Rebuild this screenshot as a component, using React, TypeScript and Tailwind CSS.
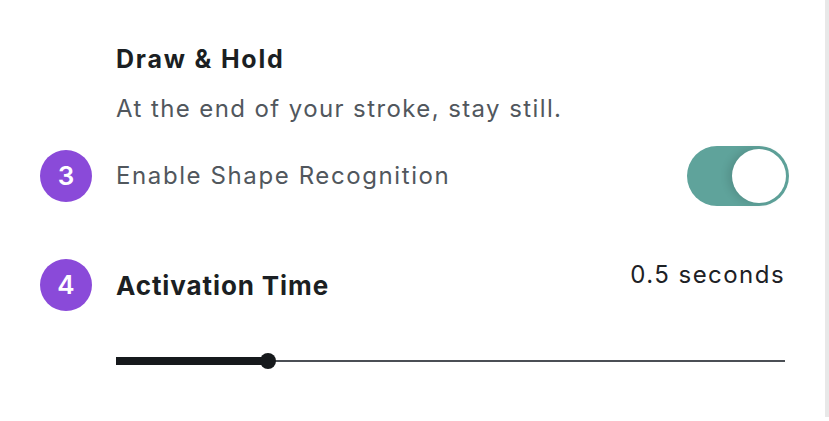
import { useState } from "react";

const font = { fontFamily: "Inter, 'Noto Sans', sans-serif" };

function Step({ n }: { n: number }) {
  return (
    <div className="w-[52px] h-[52px] shrink-0 rounded-full bg-[#8a4ad9] flex items-center justify-center text-white text-[26px] font-semibold leading-none">
      {n}
    </div>
  );
}

export default function App() {
  const [on, setOn] = useState(true);
  const value = 0.5;
  const pct = 22.7;

  return (
    <div className="w-[829px] h-[421px] flex bg-white overflow-hidden" style={font}>
      <div className="flex-1 pl-[40px] pr-[36px] pt-[43px]">
        {/* Draw & Hold */}
        <div className="ml-[76px]">
          <h2 className="h-[32px] leading-[32px] text-[25px] font-bold tracking-[1.8px] text-[#1b1f23]">Draw &amp; Hold</h2>
          <p className="mt-[18px] h-[32px] leading-[32px] text-[24px] tracking-[1.4px] text-[#51575d]">
            At the end of your stroke, stay still.
          </p>
        </div>

        {/* Shape recognition */}
        <div className="mt-[20px] h-[62px] flex items-center">
          <Step n={3} />
          <span className="ml-[24px] text-[24px] tracking-[1.6px] text-[#51575d]">Enable Shape Recognition</span>
          <button
            onClick={() => setOn(!on)}
            className={`ml-auto w-[102px] h-[60px] rounded-full p-[3px] flex items-center ${on ? "bg-[#5fa39b] justify-end" : "bg-[#d1d5db] justify-start"}`}
          >
            <span className="w-[54px] h-[54px] rounded-full bg-white shadow-[-4px_0_8px_rgba(0,0,0,0.12)]" />
          </button>
        </div>

        {/* Activation time */}
        <div className="mt-[52px] h-[52px] flex items-center">
          <Step n={4} />
          <span className="ml-[24px] text-[26px] font-bold tracking-[0.9px] text-[#1b1f23]">Activation Time</span>
          <span className="ml-auto self-start -mt-[2px] mr-[4px] text-[24px] tracking-[1.45px] text-[#1d2125]">{value} seconds</span>
        </div>

        {/* Slider */}
        <div className="ml-[76px] mr-[4px] mt-[42px] h-[16px] relative flex items-center">
          <div className="w-full h-[2px] bg-[#4b4f55]" />
          <div className="absolute left-0 h-[8px] bg-[#16191c]" style={{ width: `${pct}%` }} />
          <div
            className="absolute w-[16px] h-[16px] rounded-full bg-[#16191c] -translate-x-1/2"
            style={{ left: `${pct}%` }}
          />
        </div>
      </div>
      <div className="w-[4px] bg-[#e8e8e8] mb-[4px]" />
    </div>
  );
}
